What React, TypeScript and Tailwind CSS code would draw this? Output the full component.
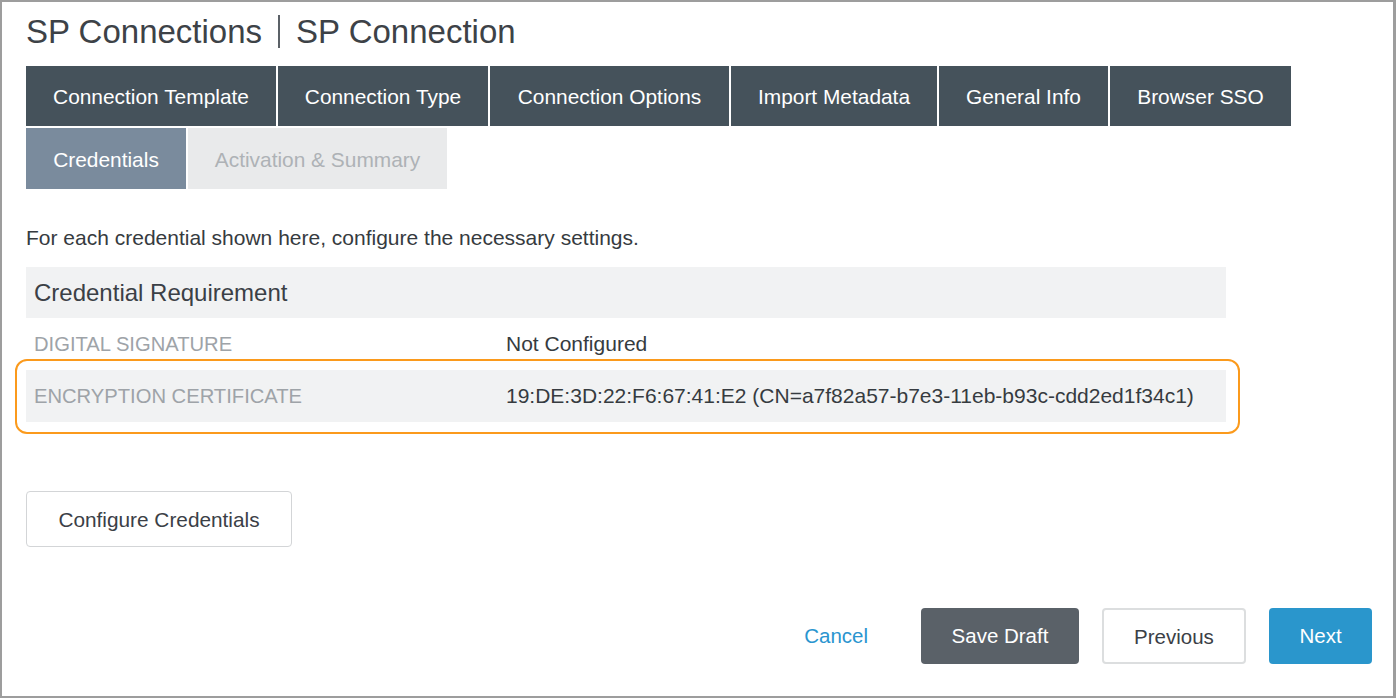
const font = { fontFamily: '"Liberation Sans", Arial, sans-serif' }

const topTabs = [
  { label: 'Connection Template', width: 'w-[250px]' },
  { label: 'Connection Type', width: 'w-[210px]' },
  { label: 'Connection Options', width: 'w-[239px]' },
  { label: 'Import Metadata', width: 'w-[206px]' },
  { label: 'General Info', width: 'w-[169px]' },
  { label: 'Browser SSO', width: 'w-[181px]' },
]

export default function App() {
  return (
    <div
      className="flex h-[698px] w-[1396px] flex-col border-2 border-r-[3px] border-[#9d9d9d] bg-white text-[#3b4046]"
      style={font}
    >
      <div className="flex flex-col pl-[24px]">
        {/* page title */}
        <div className="mt-[12px] flex h-[34px] items-center text-[33px] leading-none text-[#3d4247]">
          <span>SP Connections</span>
          <span className="mx-[16px] h-[33px] w-[2px] bg-[#5b6167]" />
          <span>SP Connection</span>
        </div>

        {/* wizard tabs */}
        <div className="mt-[18px] flex gap-[2px]">
          {topTabs.map((t) => (
            <div
              key={t.label}
              className={`flex h-[60px] items-center justify-center pt-[2px] bg-[#45525b] text-[20.9px] text-white ${t.width}`}
            >
              {t.label}
            </div>
          ))}
        </div>
        <div className="mt-[2px] flex gap-[2px]">
          <div className="flex h-[61px] w-[160px] items-center justify-center pt-[3px] bg-[#7a8b9d] text-[20.9px] text-white">
            Credentials
          </div>
          <div className="flex h-[61px] w-[259px] items-center justify-center pt-[3px] bg-[#e9eaeb] text-[20.9px] text-[#aeb2b6]">
            Activation &amp; Summary
          </div>
        </div>

        <p className="mt-[37px] text-[21px] leading-[24px] text-[#363b40]">
          For each credential shown here, configure the necessary settings.
        </p>

        {/* credentials table */}
        <div className="mt-[17px] w-[1200px]">
          <div className="flex h-[51px] items-center bg-[#f1f2f3] pl-[8px] text-[24px] text-[#3b4046]">
            Credential Requirement
          </div>
          <div className="flex h-[52px] items-center text-[21px]">
            <div className="w-[480px] pl-[8px] text-[20.2px] uppercase text-[#9ea3a8]">Digital Signature</div>
            <div className="text-[#363b40]">Not Configured</div>
          </div>
          <div className="relative flex h-[52px] items-center bg-[#f1f2f3] text-[21px]">
            <div className="w-[480px] pl-[8px] text-[20.2px] uppercase text-[#9ea3a8]">Encryption Certificate</div>
            <div className="text-[#363b40]">19:DE:3D:22:F6:67:41:E2 (CN=a7f82a57-b7e3-11eb-b93c-cdd2ed1f34c1)</div>
            <div className="pointer-events-none absolute -bottom-[12px] -left-[11px] -right-[14px] -top-[11px] rounded-[12px] border-2 border-[#fb9a1c]" />
          </div>
        </div>

        <button
          type="button"
          className="mt-[69px] h-[56px] w-[266px] rounded-[4px] border border-[#d3d5d7] bg-white pt-[2px] text-[20.8px] text-[#3b4046]"
        >
          Configure Credentials
        </button>
      </div>

      {/* footer actions */}
      <div className="mt-[61px] flex items-center justify-end pr-[21px] text-[20.5px]">
        <span className="mr-[53px] text-[#2a95cf]">Cancel</span>
        <button type="button" className="h-[56px] w-[158px] rounded-[4px] bg-[#5a6168] text-white">
          Save Draft
        </button>
        <button
          type="button"
          className="ml-[23px] h-[56px] w-[144px] rounded-[4px] border-2 border-[#dcdedf] bg-white pt-[2px] text-[#3b4046]"
        >
          Previous
        </button>
        <button type="button" className="ml-[23px] h-[56px] w-[103px] rounded-[4px] bg-[#2a96cc] text-white">
          Next
        </button>
      </div>
    </div>
  )
}
